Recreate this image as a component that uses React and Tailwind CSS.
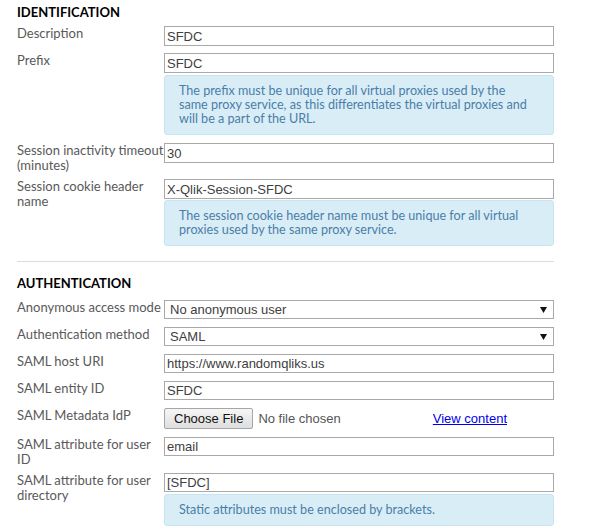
import React from 'react';

const labelCls = "w-[147px] shrink-0 whitespace-nowrap text-[13px] leading-[15px] text-[#595959]";
const inputCls = "w-[390px] border border-[#a9a9a9] bg-white px-[2px] text-[13px] text-[#404040] outline-none font-['Liberation_Sans',Arial,sans-serif]";

const Info = ({ children, className = '' }) => (
  <div className={`w-[390px] rounded-[3px] border border-[#c7e4f1] bg-[#d9edf7] px-[14px] py-[8px] text-[12.6px] leading-[14px] text-[#4a7ea8] ${className}`}>
    {children}
  </div>
);

const Row = ({ label, className = '', children }) => (
  <div className={`flex items-start ${className}`}>
    <div className={labelCls}>{label}</div>
    <div className="flex flex-col">{children}</div>
  </div>
);

const Select = ({ value }) => (
  <div className="flex h-[19px] w-[390px] items-center justify-between border border-[#a9a9a9] bg-white pl-[5px] pr-[6px] text-[13px] text-[#404040] font-['Liberation_Sans',Arial,sans-serif]">
    <span>{value}</span>
    <svg width="7" height="6" viewBox="0 0 7 6"><path d="M0 0h7L3.5 6z" fill="#111" /></svg>
  </div>
);

export default function App() {
  return (
    <div className="min-h-[530px] bg-white pl-[17px] pt-[4px] font-['Lato','Open_Sans',sans-serif]">
      <h2 className="text-[13px] font-bold leading-[16px] text-black">IDENTIFICATION</h2>

      <Row label="Description" className="mt-[6px]">
        <input readOnly value="SFDC" className={`${inputCls} h-[20px]`} />
      </Row>
      <Row label="Prefix" className="mt-[7px]">
        <input readOnly value="SFDC" className={`${inputCls} h-[20px]`} />
        <Info className="mt-[2px]">
          The prefix must be unique for all virtual proxies used by the<br />
          same proxy service, as this differentiates the virtual proxies and<br />
          will be a part of the URL.
        </Info>
      </Row>
      <Row label={<>Session inactivity timeout<br />(minutes)</>} className="mt-[8px]">
        <input readOnly value="30" className={`${inputCls} h-[20px]`} />
      </Row>
      <Row label={<>Session cookie header<br />name</>} className="mt-[6px]">
        <input readOnly value="X-Qlik-Session-SFDC" className={`${inputCls} h-[20px]`} />
        <Info className="mt-[1px]">
          The session cookie header name must be unique for all virtual<br />
          proxies used by the same proxy service.
        </Info>
      </Row>

      <div className="mt-[15px] h-px w-[537px] bg-[#dcdcdc]" />

      <h2 className="mt-[13px] text-[13px] font-bold leading-[16px] text-black">AUTHENTICATION</h2>

      <Row label="Anonymous access mode" className="mt-[9px]">
        <Select value="No anonymous user" />
      </Row>
      <Row label="Authentication method" className="mt-[8px]">
        <Select value="SAML" />
      </Row>
      <Row label="SAML host URI" className="mt-[8px]">
        <input readOnly value="https://www.randomqliks.us" className={`${inputCls} h-[19px]`} />
      </Row>
      <Row label="SAML entity ID" className="mt-[8px]">
        <input readOnly value="SFDC" className={`${inputCls} h-[19px]`} />
      </Row>
      <Row label="SAML Metadata IdP" className="mt-[8px]">
        <div className="flex w-[390px] items-center font-['Liberation_Sans',Arial,sans-serif] text-[13px]">
          <button className="h-[21px] rounded-[2px] border border-[#a6a6a6] bg-gradient-to-b from-[#f6f6f6] to-[#dedede] px-[9px] text-[#111]">Choose File</button>
          <span className="ml-[5px] text-[#555]">No file chosen</span>
          <a href="#" className="ml-auto mr-[47px] text-[#0000ee] underline">View content</a>
        </div>
      </Row>
      <Row label={<>SAML attribute for user<br />ID</>} className="mt-[8px]">
        <input readOnly value="email" className={`${inputCls} h-[19px]`} />
      </Row>
      <Row label={<>SAML attribute for user<br />directory</>} className="mt-[6px]">
        <input readOnly value="[SFDC]" className={`${inputCls} h-[19px]`} />
        <Info className="mt-[2px]">Static attributes must be enclosed by brackets.</Info>
      </Row>
    </div>
  );
}
